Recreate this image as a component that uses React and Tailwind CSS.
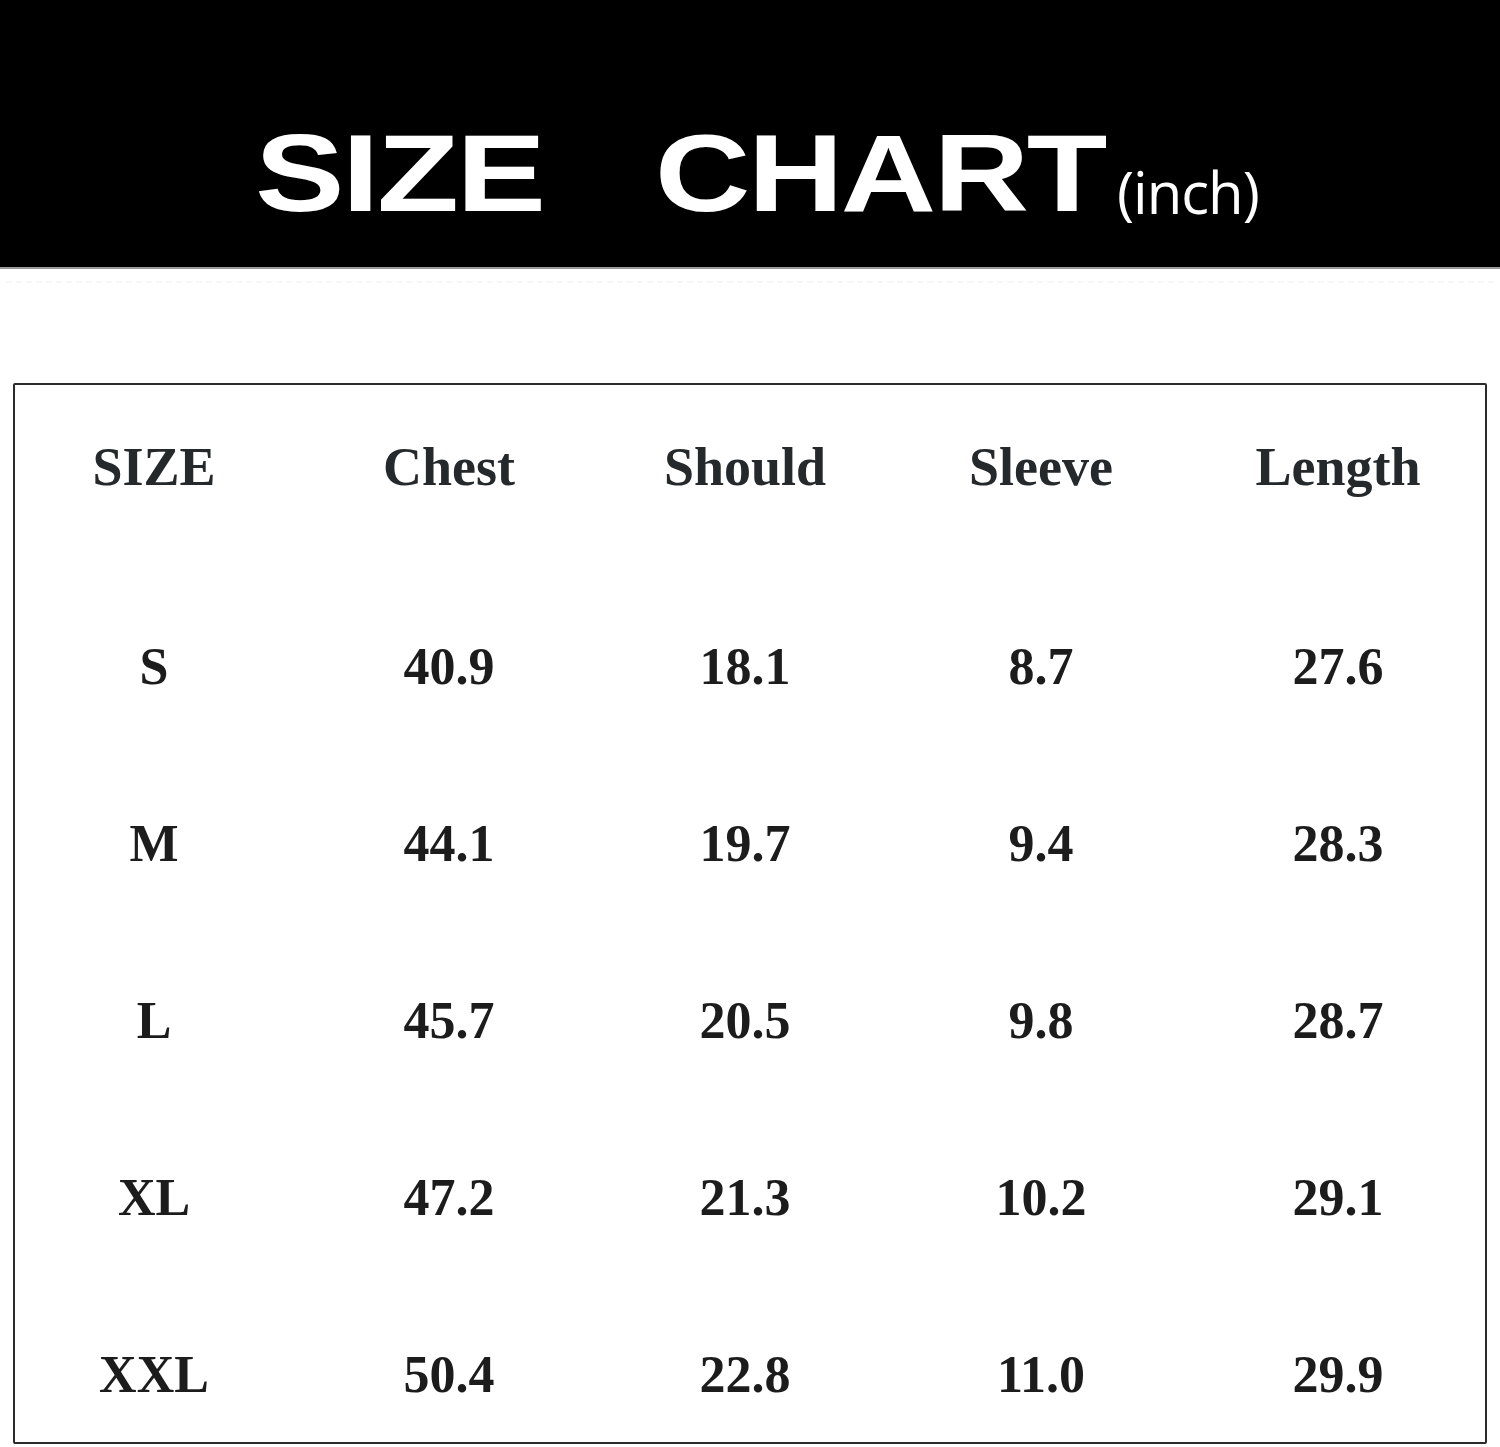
const headers = ['SIZE', 'Chest', 'Should', 'Sleeve', 'Length'];

const rows = [
  ['S', '40.9', '18.1', '8.7', '27.6'],
  ['M', '44.1', '19.7', '9.4', '28.3'],
  ['L', '45.7', '20.5', '9.8', '28.7'],
  ['XL', '47.2', '21.3', '10.2', '29.1'],
  ['XXL', '50.4', '22.8', '11.0', '29.9'],
];

// column centres line up with the reference (153 / 448 / 744 / 1040 / 1337)
const cols = 'grid grid-cols-[278px_312px_280px_312px_282px] justify-items-center';

export default function App() {
  return (
    <div className="w-[1500px] h-[1447px] bg-white overflow-hidden">
      <header className="h-[269px] bg-black border-b-2 border-[#9a9a9a] flex items-end pb-[50px] pl-[255px]">
        <Word width="w-[400px]" scale="scale-x-[1.22]">SIZE</Word>
        <Word width="w-[462px]" scale="scale-x-[1.2]">CHART</Word>
        <span className="text-white text-[58px] leading-none font-['Open_Sans',sans-serif] tracking-[-1px] mb-[-4px]">
          (inch)
        </span>
      </header>

      <div className="h-[14px] mx-[6px] border-b-2 border-dashed border-[#f6f6f6]" />

      <div className="mt-[100px] ml-[13px] w-[1474px] h-[1061px] border-2 border-[#2b2b2b] rounded-[2px] font-['Liberation_Serif',serif]">
        <div className={`${cols} h-[164px] items-center text-[54px] font-bold text-[#25292b] leading-none`}>
          {headers.map(h => (
            <div key={h}>{h}</div>
          ))}
        </div>

        <div className="pt-[29px]">
          {rows.map(r => (
            <div key={r[0]} className={`${cols} h-[177px] items-center text-[52px] font-bold text-[#1c1c1c] leading-none`}>
              {r.map((v, i) => (
                <div key={i}>{v}</div>
              ))}
            </div>
          ))}
        </div>
      </div>
    </div>
  );
}

function Word({ children, width, scale }) {
  return (
    <span className={`${width} inline-block`}>
      <span className={`inline-block origin-left ${scale} text-white text-[110px] leading-[80px] font-bold font-['Liberation_Sans',sans-serif] tracking-[-2px]`}>
        {children}
      </span>
    </span>
  );
}
